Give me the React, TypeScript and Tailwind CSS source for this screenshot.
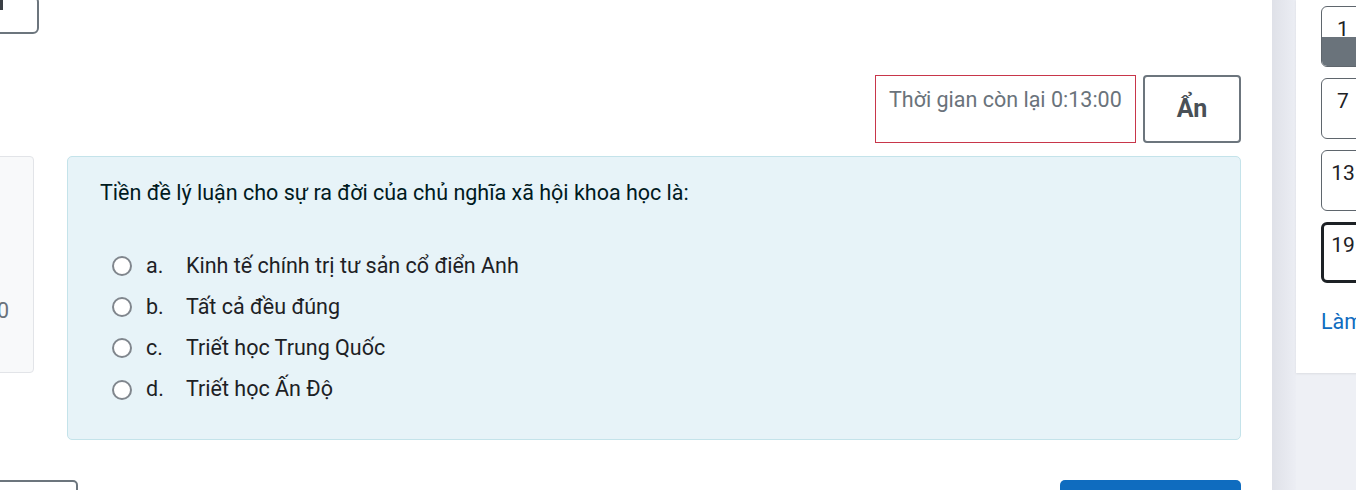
import React from "react";

const font = { fontFamily: "Roboto, 'Noto Sans', sans-serif" };

function Radio() {
  return (
    <span className="inline-block w-[20px] h-[20px] rounded-full border-2 border-[#80868d] bg-white shrink-0" />
  );
}

const options = [
  ["a.", "Kinh tế chính trị tư sản cổ điển Anh"],
  ["b.", "Tất cả đều đúng"],
  ["c.", "Triết học Trung Quốc"],
  ["d.", "Triết học Ấn Độ"],
];

export default function App() {
  return (
    <div
      className="w-[1356px] h-[490px] overflow-hidden flex bg-[#eef0f5]"
      style={font}
    >
      {/* main */}
      <div className="w-[1272px] h-full bg-white flex flex-col overflow-hidden shrink-0">
        {/* top-left box */}
        <div className="h-[34px] flex">
          <div className="-ml-[41px] -mt-[4px] w-[80px] h-[38px] border-2 border-[#6c757d] rounded-md relative">
            <span className="absolute left-[39px] top-[0px] w-[3px] h-[12px] bg-[#3a3f45]" />
          </div>
        </div>

        {/* timer row */}
        <div className="mt-[41px] flex justify-end pr-[31px] gap-[7px]">
          <div className="w-[261px] h-[68px] border border-[#c8364a] px-[13px] pt-[10px] text-[21.5px] leading-[28px] text-[#6a737b] whitespace-nowrap">
            Thời gian còn lại 0:13:00
          </div>
          <div className="w-[98px] h-[68px] border-2 border-[#6c757d] rounded-[4px] flex items-center justify-center text-[25px] font-bold text-[#495057]">
            Ẩn
          </div>
        </div>

        {/* content row */}
        <div className="mt-[13px] flex">
          <div className="-ml-[40px] w-[74px] h-[217px] bg-[#f8f9fa] border border-[#e2e4e8] rounded-[4px] relative">
            <span className="absolute left-[24px] top-[138px] text-[21.5px] text-[#6a737b]">10</span>
          </div>
          <div className="ml-[33px] w-[1174px] h-[284px] bg-[#e7f3f8] border border-[#c4e3ea] rounded-[5px] pl-[32px] pt-[20px]">
            <div className="text-[21.5px] leading-[32px] text-[#001a1e] whitespace-nowrap">
              Tiền đề lý luận cho sự ra đời của chủ nghĩa xã hội khoa học là:
            </div>
            <div className="mt-[36px] flex flex-col pl-[12px]">
              {options.map(([l, t]) => (
                <div key={l} className="h-[41.3px] flex items-center">
                  <Radio />
                  <span className="ml-[14px] w-[40px] text-[21.5px] text-[#1d2125]">{l}</span>
                  <span className="text-[21.5px] text-[#1d2125] whitespace-nowrap">{t}</span>
                </div>
              ))}
            </div>
          </div>
        </div>

        {/* bottom row */}
        <div className="mt-[40px] flex justify-between pr-[31px]">
          <div className="-ml-[40px] w-[118px] h-[40px] border-2 border-[#6c757d] rounded-[5px]" />
          <div className="w-[181px] h-[40px] bg-[#0f6cbf] rounded-[5px]" />
        </div>
      </div>

      {/* gutter */}
      <div className="w-[24px] h-full bg-gradient-to-r from-[#dfe1e8] to-[#eceef4] shrink-0" />

      {/* right panel */}
      <div className="flex-1 flex flex-col h-full">
        <div className="h-[373px] bg-white pl-[25px] pt-[6px] overflow-hidden shadow-[0_1px_2px_rgba(0,0,0,0.08)]">
          <div className="flex flex-col gap-[11px] w-[44px]">
            <div className="h-[61px] border border-[#5f666d] rounded-[6px] overflow-hidden flex flex-col">
              <div className="h-[30px] flex justify-center pt-[11px] text-[21px] leading-[22px] text-[#1d2125]">1</div>
              <div className="flex-1 bg-[#6a737b]" />
            </div>
            <div className="h-[61px] border border-[#5f666d] rounded-[6px] flex justify-center pt-[11px] text-[21px] leading-[22px] text-[#1d2125]">7</div>
            <div className="h-[61px] border border-[#5f666d] rounded-[6px] flex justify-center pt-[11px] text-[21px] leading-[22px] text-[#1d2125]">13</div>
            <div className="h-[61px] border-[3px] border-[#1d2125] rounded-[6px] flex justify-center pt-[9px] text-[21px] leading-[22px] text-[#1d2125]">19</div>
          </div>
          <div className="mt-[23px] text-[21.5px] text-[#0f6cbf] whitespace-nowrap">Làm mới</div>
        </div>
      </div>
    </div>
  );
}
